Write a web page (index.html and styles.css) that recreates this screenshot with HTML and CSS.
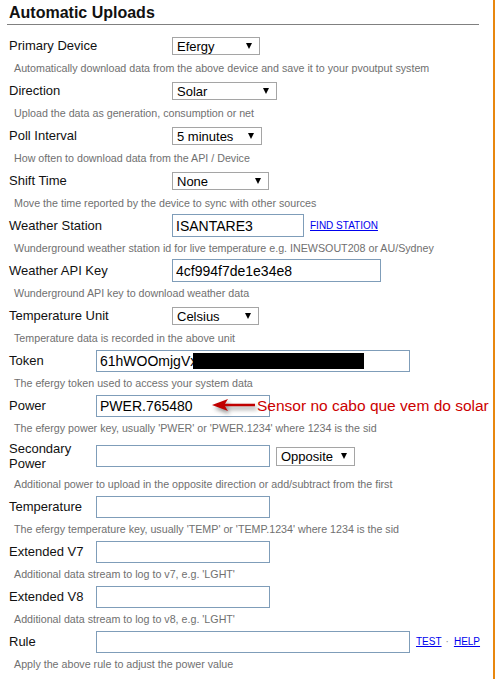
FILE: index.html
```html
<!DOCTYPE html>
<html lang="en">
<head>
    <meta charset="UTF-8">
    <title>Automatic Uploads</title>
    <link rel="stylesheet" href="styles.css">
</head>
<body>
    <div class="page">
        <div class="panel">
            <h2 class="title">Automatic Uploads</h2>

            <!-- Device settings -->
            <div class="form form-wide">
                <div class="row">
                    <label>Primary Device</label>
                    <div class="select sel-device"><select><option>Efergy</option></select></div>
                </div>
                <p class="help">Automatically download data from the above device and save it to your pvoutput system</p>

                <div class="row">
                    <label>Direction</label>
                    <div class="select sel-direction"><select><option>Solar</option></select></div>
                </div>
                <p class="help">Upload the data as generation, consumption or net</p>

                <div class="row">
                    <label>Poll Interval</label>
                    <div class="select sel-poll"><select><option>5 minutes</option></select></div>
                </div>
                <p class="help">How often to download data from the API / Device</p>

                <div class="row">
                    <label>Shift Time</label>
                    <div class="select sel-shift"><select><option>None</option></select></div>
                </div>
                <p class="help">Move the time reported by the device to sync with other sources</p>

                <div class="row">
                    <label>Weather Station</label>
                    <div class="field">
                        <input class="input in-station" type="text" value="ISANTARE3">
                        <a href="#" class="link">FIND STATION</a>
                    </div>
                </div>
                <p class="help">Wunderground weather station id for live temperature e.g. INEWSOUT208 or AU/Sydney</p>

                <div class="row">
                    <label>Weather API Key</label>
                    <input class="input in-apikey" type="text" value="4cf994f7de1e34e8">
                </div>
                <p class="help">Wunderground API key to download weather data</p>

                <div class="row">
                    <label>Temperature Unit</label>
                    <div class="select sel-unit"><select><option>Celsius</option></select></div>
                </div>
                <p class="help">Temperature data is recorded in the above unit</p>
            </div>

            <!-- Efergy settings -->
            <div class="form form-narrow">
                <div class="row">
                    <label>Token</label>
                    <div class="field">
                        <input class="input in-long" type="text" value="61hWOOmjgVxk">
                        <span class="redacted"></span>
                    </div>
                </div>
                <p class="help">The efergy token used to access your system data</p>

                <div class="row">
                    <label>Power</label>
                    <div class="field">
                        <input class="input in-short" type="text" value="PWER.765480">
                        <div class="note">
                            <svg class="note-arrow" width="46" height="18" viewBox="0 0 46 18">
                                <path d="M1 8 L17 2 L14 6.7 L44 6.7 L44 9.3 L14 9.3 L17 14 Z" fill="#c00000"/>
                            </svg>
                            <span class="note-text">Sensor no cabo que vem do solar</span>
                        </div>
                    </div>
                </div>
                <p class="help">The efergy power key, usually 'PWER' or 'PWER.1234' where 1234 is the sid</p>

                <div class="row row-tall">
                    <label>Secondary<br>Power</label>
                    <div class="field">
                        <input class="input in-short" type="text">
                        <div class="select sel-opposite"><select><option>Opposite</option></select></div>
                    </div>
                </div>
                <p class="help">Additional power to upload in the opposite direction or add/subtract from the first</p>

                <div class="row">
                    <label>Temperature</label>
                    <input class="input in-short" type="text">
                </div>
                <p class="help">The efergy temperature key, usually 'TEMP' or 'TEMP.1234' where 1234 is the sid</p>

                <div class="row">
                    <label>Extended V7</label>
                    <input class="input in-short" type="text">
                </div>
                <p class="help">Additional data stream to log to v7, e.g. 'LGHT'</p>

                <div class="row">
                    <label>Extended V8</label>
                    <input class="input in-short" type="text">
                </div>
                <p class="help">Additional data stream to log to v8, e.g. 'LGHT'</p>

                <div class="row">
                    <label>Rule</label>
                    <div class="field">
                        <input class="input in-long" type="text">
                        <span class="links"><a href="#" class="link">TEST</a><span class="dot">&middot;</span><a href="#" class="link">HELP</a></span>
                    </div>
                </div>
                <p class="help">Apply the above rule to adjust the power value</p>
            </div>
        </div>
    </div>
</body>
</html>
```

FILE: styles.css
```css
body {
    margin: 0;
    background: #fff;
    font-family: "Liberation Sans", Arial, sans-serif;
    color: #111;
}
.page {
    width: 495px;
    min-height: 679px;
    box-sizing: border-box;
    border-right: 2px solid #e8870f;
}
.panel {
    padding: 0 14px 0 7px;
}
.title {
    margin: 0 0 9px 0;
    padding: 3px 0 2px 2px;
    font-size: 16px;
    line-height: 19px;
    font-weight: bold;
    color: #111;
    border-bottom: 1px solid #808080;
}
.row {
    display: grid;
    align-items: center;
    min-height: 23px;
    padding-left: 2px;
}
.form-wide .row {
    grid-template-columns: 163px auto;
}
.form-narrow .row {
    grid-template-columns: 87px auto;
}
.row-tall {
    padding-top: 2px;
    padding-bottom: 2px;
}
.row label {
    font-size: 13px;
    line-height: 15px;
    color: #111;
}
.help {
    margin: 0;
    padding-left: 7px;
    font-size: 10.7px;
    line-height: 22px;
    color: #707070;
}
.field {
    display: flex;
    align-items: center;
    position: relative;
}

/* inputs */
.input {
    box-sizing: border-box;
    height: 22px;
    margin: 0;
    padding: 0 3px;
    border: 1px solid #7f9db9;
    font-family: "Liberation Sans", Arial, sans-serif;
    font-size: 14px;
    color: #000;
    background: #fff;
    outline: none;
}
.form-wide .input {
    height: 23px;
}
.in-station { width: 132px; }
.in-apikey { width: 209px; }
.in-long { width: 314px; }
.in-short { width: 174px; }

/* selects */
.select {
    position: relative;
    display: inline-block;
    height: 18px;
}
.select select {
    -webkit-appearance: none;
    appearance: none;
    box-sizing: border-box;
    width: 100%;
    height: 100%;
    margin: 0;
    padding: 0 0 0 4px;
    border: 1px solid #a5a5a5;
    border-radius: 0;
    background: #fff;
    font-family: "Liberation Sans", Arial, sans-serif;
    font-size: 13px;
    color: #000;
}
.select::after {
    content: "";
    position: absolute;
    right: 8px;
    top: 6px;
    border-left: 3px solid transparent;
    border-right: 3px solid transparent;
    border-top: 6px solid #000;
    pointer-events: none;
}
.sel-device { width: 88px; }
.sel-direction { width: 105px; }
.sel-poll { width: 90px; }
.sel-shift { width: 97px; }
.sel-unit { width: 87px; }
.sel-opposite {
    width: 79px;
    height: 19px;
    margin-left: 6px;
}

/* links */
.link {
    margin-left: 6px;
    font-size: 10px;
    color: #0000ee;
    text-decoration: underline;
}
.links {
    display: flex;
    align-items: center;
    margin-left: 6px;
}
.links .link {
    margin-left: 0;
}
.dot {
    margin: 0 5px 0 4px;
    font-size: 10px;
    color: #888;
}

/* screenshot annotations */
.redacted {
    position: absolute;
    left: 97px;
    top: 3px;
    width: 171px;
    height: 16px;
    background: #000;
}
.note {
    position: absolute;
    left: 115px;
    top: 50%;
    transform: translateY(-50%);
    display: flex;
    align-items: center;
    white-space: nowrap;
}
.note-arrow {
    display: block;
    filter: drop-shadow(2px 3px 2px rgba(0, 0, 0, 0.45));
}
.note-text {
    margin-left: 0;
    font-size: 15.5px;
    color: #cc0000;
}
```
